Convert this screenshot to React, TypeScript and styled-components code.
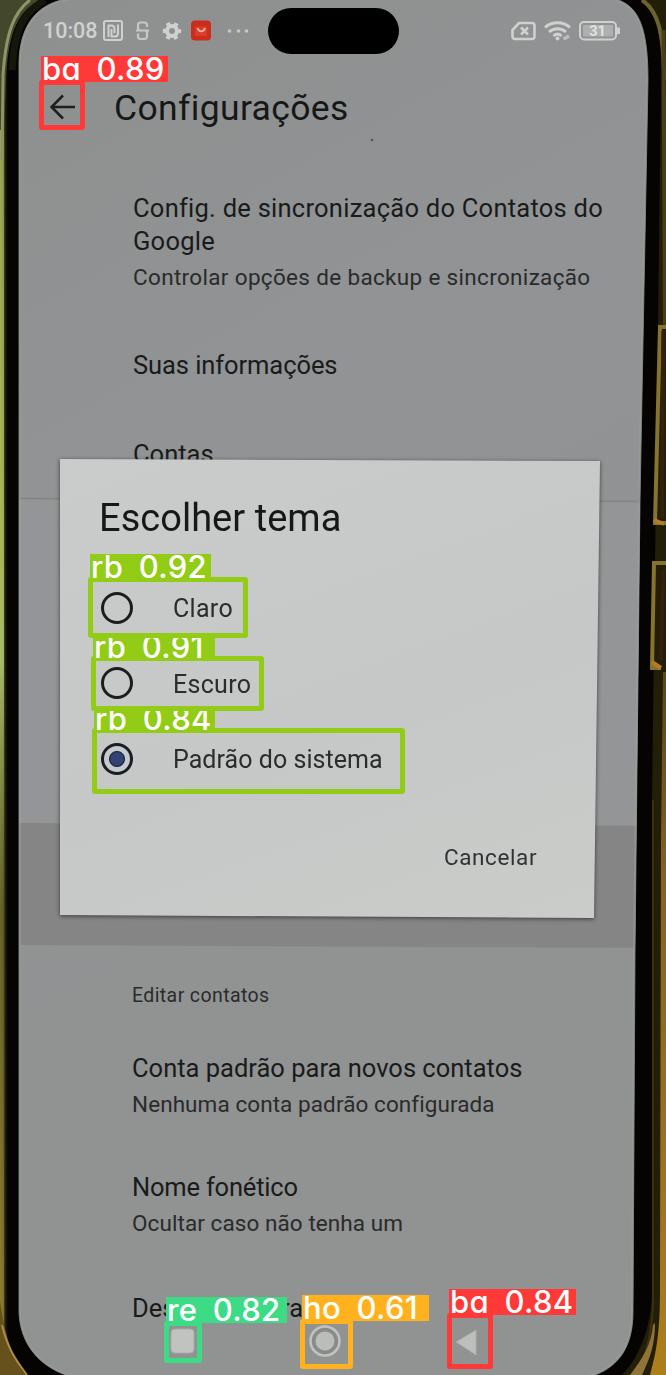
import React from 'react';
import styled, { createGlobalStyle } from 'styled-components';

const GlobalStyle = createGlobalStyle`
  * { box-sizing: border-box; }
  body { margin: 0; background: #050503; font-family: Roboto, "Liberation Sans", sans-serif; }
`;

const Photo = styled.div`
  position: relative;
  width: 666px;
  height: 1375px;
  overflow: hidden;
  background: #050503;
`;

const Backdrop = styled.svg`
  position: absolute;
  inset: 0;
  display: block;
`;

const Screen = styled.main`
  position: relative;
  height: 100%;
  display: flex;
  flex-direction: column;
  color: #191b1b;
`;

const StatusBar = styled.header`
  height: 61px;
  flex: none;
  display: flex;
  align-items: center;
  padding: 0 45px 0 43px;
  color: #d0d2d1;
`;

const StatusGroup = styled.div<{ $width: number; $end?: boolean }>`
  width: ${p => p.$width}px;
  display: flex;
  align-items: center;
  justify-content: ${p => (p.$end ? 'flex-end' : 'flex-start')};
`;

const Clock = styled.span`
  width: 60px;
  font-size: 21.5px;
  font-weight: 500;
  line-height: 26px;
`;

const Island = styled.div`
  width: 131px;
  height: 46px;
  margin-left: 1px;
  border-radius: 23px;
  background: #000;
`;

const AppBar = styled.div`
  height: 93px;
  flex: none;
  display: flex;
  align-items: center;
  padding-left: 49px;
  gap: 37px;
`;

const Heading = styled.h1<{ $size: number; $spacing: number }>`
  margin: 0;
  font-weight: 400;
  font-size: ${p => p.$size}px;
  line-height: 44px;
  letter-spacing: ${p => p.$spacing}px;
  white-space: nowrap;
  color: #161818;
`;

const SettingsList = styled.section<{ $top: number; $left: number }>`
  margin-top: ${p => p.$top}px;
  padding-left: ${p => p.$left}px;
  display: flex;
  flex-direction: column;
`;

const Setting = styled.div<{ $gap: number }>`
  margin-bottom: ${p => p.$gap}px;
`;

const SettingTitle = styled.div<{ $spacing?: number }>`
  font-size: 25.5px;
  line-height: 33px;
  letter-spacing: ${p => p.$spacing ?? 0}px;
  white-space: nowrap;
`;

const SettingNote = styled.div<{ $spacing?: number; $top?: number }>`
  margin-top: ${p => p.$top ?? 2}px;
  font-size: 22.5px;
  line-height: 34px;
  letter-spacing: ${p => p.$spacing ?? 0.08}px;
  white-space: nowrap;
  color: #292b2b;
`;

const SectionLabel = styled.div`
  font-size: 19.5px;
  line-height: 28px;
  letter-spacing: 0.4px;
  margin-bottom: 42px;
  color: #292b2b;
`;

const DialogShadow = styled.div`
  position: absolute;
  left: 60px;
  top: 459px;
  width: 540px;
  height: 459px;
  filter: drop-shadow(0 1px 2px rgba(30, 30, 30, 0.75));
`;

const Dialog = styled.div`
  height: 100%;
  display: flex;
  flex-direction: column;
  padding: 37px 63px 0 39px;
  clip-path: polygon(0 0, 100% 2px, 534px 100%, 0 456px);
  background: linear-gradient(160deg, #cacccb, #c6c8c7 55%, #caccca);
`;

const Options = styled.div`
  margin-top: 30px;
  display: flex;
  flex-direction: column;
`;

const Option = styled.label`
  height: 75.5px;
  display: flex;
  align-items: center;
  gap: 40px;
  padding-left: 2px;
  color: #2a2c2d;
`;

const OptionText = styled.span<{ $spacing: number }>`
  padding-top: 3px;
  font-size: 25px;
  line-height: 32px;
  letter-spacing: ${p => p.$spacing}px;
`;

const Radio = styled.span<{ $on?: boolean }>`
  width: 32px;
  height: 32px;
  flex: none;
  border-radius: 50%;
  border: 3px solid #1b1e20;
  background: ${p =>
    p.$on ? 'radial-gradient(circle, #334375 6px, #202638 7.5px, #c5cad0 8.5px)' : 'transparent'};
`;

const Cancel = styled.button`
  align-self: flex-end;
  margin-top: 45px;
  margin-right: -6px;
  padding: 0;
  width: 99px;
  border: 0;
  background: none;
  text-align: left;
  font: 400 22.5px/30px Roboto, sans-serif;
  letter-spacing: 0.6px;
  color: #303233;
`;

const NavBar = styled.nav`
  position: absolute;
  left: 170px;
  bottom: 17px;
  width: 308px;
  height: 34px;
  display: flex;
  align-items: center;
  justify-content: space-between;
`;

const Detection = styled.div<{ $x: number; $y: number; $w: number; $h: number; $color: string }>`
  position: absolute;
  left: ${p => p.$x}px;
  top: ${p => p.$y}px;
  width: ${p => p.$w}px;
  height: ${p => p.$h}px;
  border: 5px solid ${p => p.$color};
  border-radius: 3px;
`;

const Tag = styled.span<{ $w: number; $lift: number; $color: string }>`
  position: absolute;
  left: -3px;
  bottom: calc(100% + ${p => p.$lift}px);
  width: ${p => p.$w}px;
  height: 26px;
  padding-left: 1px;
  background: ${p => p.$color};
  color: #fff;
  font: 500 31px/26px Inter, sans-serif;
  font-feature-settings: "cv11";
  letter-spacing: 0.3px;
  word-spacing: 7px;
  white-space: pre;
`;

const detections = [
  { label: 'ba 0.89', x: 39, y: 80, w: 46, h: 50, tag: 127, lift: 3, color: '#ff3838' },
  { label: 'rb 0.84', x: 92, y: 728, w: 313, h: 66, tag: 121, lift: 1, color: '#92cc17' },
  { label: 'rb 0.91', x: 91, y: 656, w: 173, h: 55, tag: 122, lift: 1, color: '#92cc17' },
  { label: 'rb 0.92', x: 88, y: 577, w: 160, h: 61, tag: 121, lift: 2, color: '#92cc17' },
  { label: 're 0.82', x: 164, y: 1321, w: 38, h: 42, tag: 121, lift: 3, color: '#3ddb86' },
  { label: 'ho 0.61', x: 300, y: 1319, w: 53, h: 50, tag: 127, lift: 3, color: '#ffb21d' },
  { label: 'ba 0.84', x: 447, y: 1313, w: 46, h: 56, tag: 127, lift: 3, color: '#ff3838' },
];

const screenPath =
  'M75 -2 C42 0 20 20 19 62 V1312 C20 1346 42 1370 76 1378 H586 C616 1370 633 1350 633 1312 L635 950 L640 500 L648 80 C648 25 638 4 612 -2 Z';

function PhoneBackdrop() {
  return (
    <Backdrop width="666" height="1375" viewBox="0 0 666 1375">
      <defs>
        <linearGradient id="leftRim" x2="1">
          <stop offset="0" stopColor="#858544" />
          <stop offset=".4" stopColor="#5f5e2c" />
          <stop offset=".7" stopColor="#1c1b0c" />
          <stop offset="1" stopColor="#040402" />
        </linearGradient>
        <linearGradient id="leftTone" x2="0" y2="1">
          <stop offset="0" stopColor="#bcc97c" stopOpacity=".4" />
          <stop offset=".38" stopColor="#b9cb60" stopOpacity=".75" />
          <stop offset=".48" stopColor="#b3cb78" stopOpacity=".8" />
          <stop offset=".66" stopColor="#59551d" stopOpacity=".6" />
          <stop offset="1" stopColor="#a18232" stopOpacity=".7" />
        </linearGradient>
        <linearGradient id="screenTone" x2=".25" y2="1">
          <stop offset="0" stopColor="#8e9090" />
          <stop offset=".35" stopColor="#919394" />
          <stop offset="1" stopColor="#919292" />
        </linearGradient>
        <linearGradient id="rightRim" x2="0" y2="1">
          <stop offset="0" stopColor="#5e4714" />
          <stop offset=".3" stopColor="#86621f" />
          <stop offset="1" stopColor="#ac7e1c" />
        </linearGradient>
        <clipPath id="screenClip">
          <path d={screenPath} />
        </clipPath>
      </defs>
      <rect width="666" height="1375" fill="#050402" />
      <rect width="8" height="1375" fill="url(#leftRim)" />
      <rect width="4" height="1375" fill="url(#leftTone)" />
      <path d="M0 0H42C20 8 8 30 6 80L4 130H0Z" fill="#43472b" />
      <path d="M30 0C14 12 6 32 3 75L2 160" fill="none" stroke="#8e9468" strokeWidth="3" />
      <path d="M45 0C25 11 14 28 12 70" fill="none" stroke="#15170c" strokeWidth="7" />
      <path d="M0 1300C5 1340 15 1362 26 1375H0Z" fill="#66501c" />
      <path d="M2 1325C7 1346 14 1358 27 1375" fill="none" stroke="#ad8a45" strokeWidth="2" />
      <path d="M640 0C662 15 662 50 661 90L652 800V1290C652 1330 637 1360 622 1375H666V0Z" fill="#231e08" />
      <path d="M642 0C657 10 664 30 664 80" fill="none" stroke="#6b622f" strokeWidth="4" />
      <path d="M663.500 30L665 325" stroke="#4a3f12" strokeWidth="4" />
      <path d="M663 672H666V1375H650C657 1350 660 1330 660 1290L661 840Z" fill="url(#rightRim)" />
      <path d="M653 800V1300C653 1328 648 1350 637 1375" fill="none" stroke="#3a310f" strokeWidth="2" />
      <path d="M653 1325C651 1345 643 1358 630 1375H642C650 1358 655 1345 655 1323Z" fill="#8f7339" />
      <path d="M666 327H660L655 523H666M666 563H654L652 668H661" fill="none" stroke="#85732e" strokeWidth="4" />
      <path d="M663.500 331L662 518M663.500 569L661 660" stroke="#35200b" strokeWidth="4" />
      <path d="M654 520L664 524M652 662L661 668" stroke="#b97a25" strokeWidth="4" />
      <path d={screenPath} fill="url(#screenTone)" stroke="#767974" strokeWidth="1" />
      <g clipPath="url(#screenClip)">
        <path d="M0 499L666 502V826L0 823Z" fill="#949596" />
        <path d="M0 498.500L666 501.500" stroke="#828484" strokeWidth="1.500" />
        <path d="M0 823L666 826V948L0 945Z" fill="#858586" />
        <path d={screenPath} fill="none" stroke="#9ca29d" strokeOpacity=".45" strokeWidth="4" />
      </g>
      <circle cx="372" cy="140" r="1.3" fill="#555" />
    </Backdrop>
  );
}

function NotificationIcons() {
  return (
    <svg width="148" height="24" viewBox="0 0 148 24" fill="none" stroke="#cfd1d0" strokeWidth="2">
      <rect x="1" y="2" width="18" height="19" rx="2" />
      <path d="M5.500 18V6.500H8.500C11 6.500 11.500 8 11.500 10V14M8.500 10V17.500H12C14 17.500 15 16.500 15 14V5.500" />
      <path d="M44 8V6C44 4.500 43 3.500 41.500 3.500H37.500C36 3.500 35 4.500 35 6V9C35 10.500 36 11.500 37.500 11.500H41.500C43 11.500 44 12.500 44 14V17C44 19 43 20 41.500 20H37.500C36 20 35 19 35 17V14.500M33 11.500H46" strokeWidth="2.200" opacity=".85" />
      <circle cx="69" cy="12" r="5" strokeWidth="4" />
      <circle cx="69" cy="12" r="7.600" strokeWidth="3.200" strokeDasharray="4 3.960" strokeDashoffset="2" />
      <rect x="88" y="1.500" width="20" height="20" rx="4" fill="#c92d1c" stroke="none" />
      <path d="M92 7.500H104V17H92Z" fill="#dc3d27" stroke="none" />
      <path d="M94.500 9C96 13.500 100.500 13.500 102 9" stroke="#efb7a5" strokeWidth="1.800" />
      <g fill="#c6c8c7" stroke="none">
        <circle cx="126.500" cy="12" r="1.800" />
        <circle cx="135.500" cy="12" r="1.800" />
        <circle cx="143.500" cy="12" r="1.800" />
      </g>
    </svg>
  );
}

function SystemIcons() {
  return (
    <svg width="112" height="24" viewBox="0 0 112 24" fill="none" stroke="#cfd1d0" strokeWidth="2.600">
      <path d="M10 4H23C24.500 4 25.500 5 25.500 6.500V17.500C25.500 19 24.500 20 23 20H6C4.500 20 3.500 19 3.500 17.500V11Z" strokeLinejoin="round" />
      <path d="M12 8.500L19 15.500M19 8.500L12 15.500" />
      <path d="M36 8.500C43 2.300 54 2.300 61 8.500M40 13C45 8.500 52 8.500 57 13M44.500 17C47 14.700 50 14.700 52.500 17" strokeWidth="3" />
      <circle cx="48.500" cy="19.500" r="2" fill="#cfd1d0" stroke="none" />
      <path d="M54.500 20L60 17" strokeWidth="3.500" opacity=".7" />
      <rect x="71" y="3" width="36" height="17.500" rx="4" strokeWidth="2" />
      <rect x="74" y="6" width="30" height="11.500" fill="#aeb0af" stroke="none" />
      <path d="M109.500 8.500V15" strokeWidth="3" />
      <text x="88.500" y="17" textAnchor="middle" fill="#e0e2e1" stroke="none" fontSize="14.500" fontWeight="700" fontFamily="Roboto">31</text>
    </svg>
  );
}

export default function App() {
  return (
    <>
      <GlobalStyle />
      <Photo>
        <PhoneBackdrop />
        <Screen>
          <StatusBar>
            <StatusGroup $width={224}>
              <Clock>10:08</Clock>
              <NotificationIcons />
            </StatusGroup>
            <Island />
            <StatusGroup $width={222} $end>
              <SystemIcons />
            </StatusGroup>
          </StatusBar>
          <AppBar>
            <svg width="28" height="28" viewBox="0 0 28 28" fill="none" stroke="#1d1f1f" strokeWidth="2.500">
              <path d="M26 13H3M14 1.500L2.500 13L14 24.500" />
            </svg>
            <Heading $size={35.5} $spacing={0.35}>Configurações</Heading>
          </AppBar>
          <SettingsList $top={38} $left={133}>
            <Setting $gap={55}>
              <SettingTitle $spacing={0.25}>Config. de sincronização do Contatos do<br />Google</SettingTitle>
              <SettingNote $spacing={0.33}>Controlar opções de backup e sincronização</SettingNote>
            </Setting>
            <Setting $gap={56}>
              <SettingTitle $spacing={-0.08}>Suas informações</SettingTitle>
            </Setting>
            <Setting $gap={0}>
              <SettingTitle>Contas</SettingTitle>
            </Setting>
          </SettingsList>
          <SettingsList $top={511} $left={132}>
            <SectionLabel>Editar contatos</SectionLabel>
            <Setting $gap={50}>
              <SettingTitle>Conta padrão para novos contatos</SettingTitle>
              <SettingNote>Nenhuma conta padrão configurada</SettingNote>
            </Setting>
            <Setting $gap={52}>
              <SettingTitle $spacing={-0.2}>Nome fonético</SettingTitle>
              <SettingNote>Ocultar caso não tenha um</SettingNote>
            </Setting>
            <Setting $gap={0}>
              <SettingTitle>Desfazer alterações</SettingTitle>
            </Setting>
          </SettingsList>
        </Screen>
        <DialogShadow>
          <Dialog>
            <Heading as="h2" $size={38} $spacing={0.03}>Escolher tema</Heading>
            <Options>
              <Option><Radio /><OptionText $spacing={0.3}>Claro</OptionText></Option>
              <Option><Radio /><OptionText $spacing={0.3}>Escuro</OptionText></Option>
              <Option><Radio $on /><OptionText $spacing={0.05}>Padrão do sistema</OptionText></Option>
            </Options>
            <Cancel>Cancelar</Cancel>
          </Dialog>
        </DialogShadow>
        <NavBar>
          <svg width="25" height="34" viewBox="0 0 25 34">
            <rect x="1" y="5" width="23" height="24" rx="4" fill="#c1c3c1" stroke="#aaaca9" />
          </svg>
          <svg width="34" height="34" viewBox="0 0 34 34">
            <circle cx="17" cy="17" r="14.500" fill="#898b89" stroke="#c1c3c1" strokeWidth="2.500" />
            <circle cx="17" cy="17" r="9.500" fill="#bbbdbb" />
          </svg>
          <svg width="24" height="34" viewBox="0 0 24 34">
            <path d="M2 18L22 6V31Z" fill="#bdbfbd" stroke="#a9aba9" />
          </svg>
        </NavBar>
        {detections.map(d => (
          <Detection key={d.label} $x={d.x} $y={d.y} $w={d.w} $h={d.h} $color={d.color}>
            <Tag $w={d.tag} $lift={d.lift} $color={d.color}>{d.label}</Tag>
          </Detection>
        ))}
      </Photo>
    </>
  );
}
